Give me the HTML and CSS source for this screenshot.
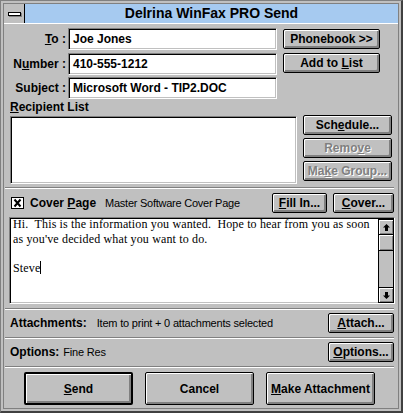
FILE: index.html
```html
<!DOCTYPE html>
<html lang="en">
<head>
	<meta charset="UTF-8"/>
	<title>Delrina WinFax PRO Send</title>
	<link rel="stylesheet" href="styles.css">
</head>
<body>
	<!-- Send dialog window -->
	<div class="window">
		<div class="frame">
			<div class="titlebar">
				<div class="sysmenu"><span class="dash"></span></div>
				<div class="title">Delrina WinFax PRO Send</div>
			</div>
			<div class="content">
				<!-- Addressing fields and phonebook buttons -->
				<div class="address">
					<div class="fields">
						<span class="lbl"><u>T</u>o :</span>
						<div class="field">Joe Jones</div>
						<span class="lbl">N<u>u</u>mber :</span>
						<div class="field">410-555-1212</div>
						<span class="lbl">Subject :</span>
						<div class="field">Microsoft Word - TIP2.DOC</div>
					</div>
					<div class="side-btns">
						<button class="btn">Phonebook &gt;&gt;</button>
						<button class="btn">Add to <u>L</u>ist</button>
					</div>
				</div>
				<!-- Recipient list -->
				<div class="recipients">
					<div class="recip-left">
						<div class="recip-label"><u>R</u>ecipient List</div>
						<div class="listbox"></div>
					</div>
					<div class="recip-btns">
						<button class="btn">Sch<u>e</u>dule...</button>
						<button class="btn disabled">Remo<u>v</u>e</button>
						<button class="btn disabled">Ma<u>k</u>e Group...</button>
					</div>
				</div>
				<div class="etch"></div>
				<!-- Cover page -->
				<div class="cover-row">
					<svg class="check" width="13" height="12" viewBox="0 0 13 12">
						<rect x="0.5" y="0.5" width="12" height="11" fill="#fff" stroke="#000"/>
						<path d="M3.5 2.5L9.5 9.5M9.5 2.5L3.5 9.5" stroke="#000" stroke-width="2"/>
					</svg>
					<span class="cover-label">Cover <u>P</u>age</span>
					<span class="cover-name">Master Software Cover Page</span>
					<button class="btn fill-btn"><u>F</u>ill In...</button>
					<button class="btn cover-btn"><u>C</u>over...</button>
				</div>
				<div class="memo">
<div class="memo-text">Hi.  This is the information you wanted.  Hope to hear from you as soon
as you've decided what you want to do.

Steve<span class="caret"></span></div>
					<div class="scrollbar">
						<div class="sb-btn">
							<svg width="7" height="7" viewBox="0 0 7 7"><polygon points="3.5,0 7,3.5 5,3.5 5,7 2,7 2,3.5 0,3.5" fill="#000"/></svg>
						</div>
						<div class="sb-thumb"></div>
						<div class="sb-track"></div>
						<div class="sb-btn down">
							<svg width="7" height="7" viewBox="0 0 7 7"><polygon points="3.5,7 7,3.5 5,3.5 5,0 2,0 2,3.5 0,3.5" fill="#000"/></svg>
						</div>
					</div>
				</div>
				<div class="etch after-memo"></div>
				<!-- Attachments and options -->
				<div class="info-row">
					<span class="info-label">Attachments:</span>
					<span class="info-value attach-value">Item to print + 0 attachments selected</span>
					<button class="btn info-btn"><u>A</u>ttach...</button>
				</div>
				<div class="etch tight"></div>
				<div class="info-row">
					<span class="info-label">Options:</span>
					<span class="info-value">Fine Res</span>
					<button class="btn info-btn"><u>O</u>ptions...</button>
				</div>
				<div class="etch tight"></div>
				<!-- Dialog actions -->
				<div class="actions">
					<button class="btn big default"><u>S</u>end</button>
					<button class="btn big">Cancel</button>
					<button class="btn big"><u>M</u>ake Attachment</button>
				</div>
			</div>
		</div>
	</div>
</body>
</html>
```

FILE: styles.css
```css
	/* Page reset */
	body {
		margin: 0;
		background-color: #c0c0c0;
		font-family: "Liberation Sans", Arial, sans-serif;
	}
	/* Outer window border */
	.window {
		width: 403px;
		height: 413px;
		box-sizing: border-box;
		background-color: #c0c0c0;
		border-style: solid;
		border-width: 1px 2px 2px 1px;
		border-color: #808080 #404040 #404040 #808080;
		padding: 2px;
	}
	.frame {
		height: 100%;
		box-sizing: border-box;
		border: 1px solid #808080;
	}
	/* Title bar */
	.titlebar {
		display: flex;
		height: 19px;
		background-color: #a6caf0;
		border-bottom: 1px solid #fff;
	}
	.sysmenu {
		width: 20px;
		display: flex;
		align-items: center;
		justify-content: center;
		background-color: #c0c0c0;
		border-right: 1px solid #000;
	}
	.dash {
		width: 11px;
		height: 2px;
		background-color: #fff;
		border: 1px solid #000;
		box-shadow: 1px 1px #808080;
	}
	.title {
		flex: 1;
		text-align: center;
		font-size: 14px;
		font-weight: bold;
		line-height: 19px;
		color: #000;
	}
	.content {
		padding: 0 5px 0 6px;
	}
	/* Shared 3D button */
	.btn {
		height: 20px;
		padding: 0;
		font-family: "Liberation Sans", Arial, sans-serif;
		font-size: 12px;
		font-weight: bold;
		color: #000;
		background-color: #c0c0c0;
		border: 1px solid #000;
		border-radius: 2px;
		box-shadow: inset 1px 1px #fff, inset -2px -2px #808080;
		white-space: nowrap;
	}
	.btn.disabled {
		color: #808080;
		text-shadow: 1px 1px #fff;
	}
	/* Sunken white edit boxes */
	.field,
	.listbox,
	.memo {
		box-sizing: border-box;
		background-color: #fff;
		border: 1px solid;
		border-color: #808080 #fff #fff #808080;
		box-shadow: inset 1px 1px #000, inset -1px -1px #c0c0c0;
	}
	.address {
		display: flex;
		margin-top: 4px;
	}
	.fields {
		display: grid;
		grid-template-columns: 56px 209px;
		grid-auto-rows: 22px;
		column-gap: 2px;
		row-gap: 2.5px;
	}
	.lbl {
		text-align: right;
		font-size: 12px;
		font-weight: bold;
		line-height: 22px;
		white-space: nowrap;
	}
	.field {
		padding-left: 4px;
		font-size: 12px;
		font-weight: bold;
		line-height: 20px;
		white-space: nowrap;
	}
	.side-btns {
		display: flex;
		flex-direction: column;
		gap: 4px;
		padding-top: 1px;
		margin-left: 6px;
	}
	.side-btns .btn {
		width: 97px;
	}
	/* Recipient list */
	.recipients {
		display: flex;
		margin-top: 1px;
	}
	.recip-label {
		font-size: 12px;
		font-weight: bold;
		line-height: 14px;
		margin-bottom: 2px;
	}
	.listbox {
		width: 287px;
		height: 68px;
	}
	.recip-btns {
		display: flex;
		flex-direction: column;
		gap: 3px;
		margin: 15px 0 0 6px;
	}
	.recip-btns .btn {
		width: 89px;
	}
	/* Etched separator line */
	.etch {
		border-top: 1px solid #808080;
		border-bottom: 1px solid #fff;
		margin: 3px -1px 0 -5px;
	}
	.etch.after-memo {
		margin-top: 4px;
	}
	.etch.tight {
		margin-top: 0;
	}
	/* Cover page row */
	.cover-row {
		display: flex;
		align-items: center;
		height: 20px;
		margin-top: 4px;
	}
	.check {
		margin-left: 1px;
	}
	.cover-label {
		margin-left: 6px;
		font-size: 12px;
		font-weight: bold;
	}
	.cover-name {
		margin-left: 9px;
		font-size: 11px;
		letter-spacing: -0.25px;
	}
	.fill-btn {
		width: 55px;
		margin-left: auto;
	}
	.cover-btn {
		width: 61px;
		margin: 0 -1px 0 6px;
	}
	/* Cover note editor */
	.memo {
		display: flex;
		height: 87px;
		margin: 4px -2px 0 -1px;
	}
	.memo-text {
		flex: 1;
		padding: 0 0 0 3px;
		margin-top: -1px;
		font-family: "Liberation Serif", "Times New Roman", serif;
		font-size: 12px;
		letter-spacing: 0.15px;
		line-height: 14.6px;
		white-space: pre;
		overflow: hidden;
	}
	.caret {
		display: inline-block;
		width: 0;
		height: 13px;
		border-left: 1px solid #000;
		vertical-align: -2px;
	}
	.scrollbar {
		display: flex;
		flex-direction: column;
		width: 14px;
		margin: 1px 0 0 0;
		border: 1px solid #000;
		background-color: #c0c0c0;
	}
	.sb-btn {
		height: 14px;
		display: flex;
		align-items: center;
		justify-content: center;
		border-bottom: 1px solid #000;
		box-shadow: inset 1px 1px #fff, inset -1px -1px #808080;
	}
	.sb-btn.down {
		border-bottom: none;
		border-top: 1px solid #000;
	}
	.sb-thumb {
		height: 15px;
		border-bottom: 1px solid #000;
		box-shadow: inset 1px 1px #fff, inset -1px -1px #808080;
	}
	.sb-track {
		flex: 1;
	}
	/* Attachments / options rows */
	.info-row {
		display: flex;
		align-items: center;
		padding: 3px 0 4px;
	}
	.info-label {
		font-size: 12px;
		font-weight: bold;
	}
	.info-value {
		margin-left: 4px;
		font-size: 11px;
		letter-spacing: -0.2px;
	}
	.attach-value {
		margin-left: 10px;
	}
	.info-btn {
		width: 66px;
		margin: 0 -1px 0 auto;
	}
	/* Bottom action buttons */
	.actions {
		display: flex;
		gap: 12px;
		margin-top: 4px;
		padding-left: 14px;
	}
	.btn.big {
		width: 109px;
		height: 33px;
	}
	.btn.default {
		border-width: 2px;
	}
```
